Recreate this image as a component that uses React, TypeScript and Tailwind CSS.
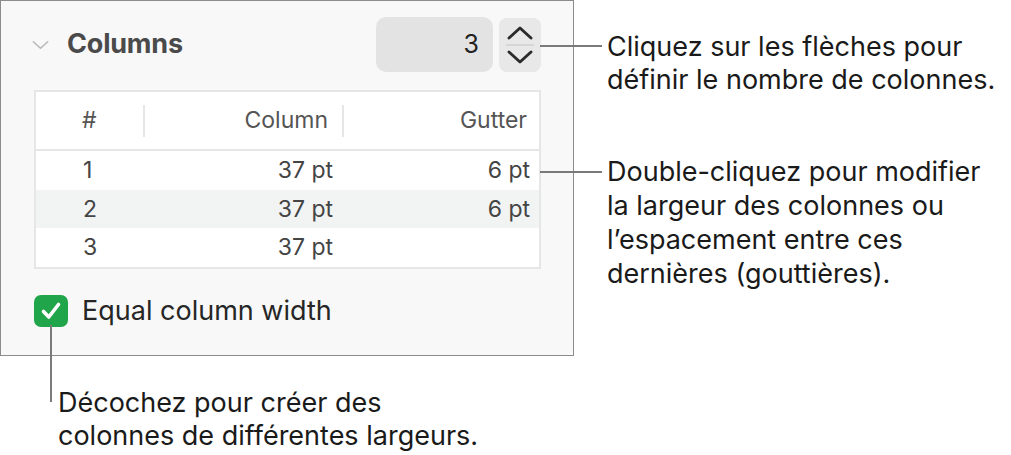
import React from "react"

const ROWS = [
  { n: "1", column: "37 pt", gutter: "6 pt" },
  { n: "2", column: "37 pt", gutter: "6 pt" },
  { n: "3", column: "37 pt", gutter: "" },
]

const Chevron = ({ up, className, width = 2.4 }: { up?: boolean; className?: string; width?: number }) => (
  <svg viewBox="0 0 26 14" className={className} fill="none">
    <path
      d={up ? "M2 12 L13 2 L24 12" : "M2 2 L13 12 L24 2"}
      stroke="currentColor"
      strokeWidth={width}
      strokeLinecap="round"
      strokeLinejoin="round"
    />
  </svg>
)

const ColumnsPanel = () => (
  <div className="w-[574px] h-[356px] shrink-0 border border-[#8c8c8c] bg-[#f8f8f8] pl-[33px] pr-[32px] pt-[16px]">
    <div className="flex items-center h-[55px]">
      <Chevron className="w-[17px] h-[10px] text-[#b8b8b8] ml-[-2px]" />
      <span className="ml-[18px] text-[27px] font-bold text-[#4a4a4a] tracking-[-0.2px]">Columns</span>
      <div className="ml-auto flex items-center gap-[6px] h-full">
        <div className="w-[117px] h-[55px] rounded-[10px] bg-[#e3e3e3] flex items-center justify-end pr-[14px] text-[25px] text-[#222]">
          3
        </div>
        <div className="w-[42px] h-[54px] rounded-[8px] bg-[#e8e8e8] flex flex-col items-center justify-center">
          <Chevron up width={2.9} className="w-[26px] h-[14px] text-[#2a2a2a]" />
          <div className="w-[28px] h-[2px] bg-[#d6d6d6] my-[4px]" />
          <Chevron width={2.9} className="w-[26px] h-[14px] text-[#2a2a2a]" />
        </div>
      </div>
    </div>

    <div className="mt-[18px] border-2 border-[#e6e6e6] bg-white text-[23px]">
      <div className="flex items-center h-[59px] border-b-2 border-[#e6e6e6] text-[#555]">
        <div className="w-[107px] pl-[46px]">#</div>
        <div className="w-[2px] h-[32px] bg-[#e6e6e6]" />
        <div className="w-[197px] text-right pr-[14px]">Column</div>
        <div className="w-[2px] h-[32px] bg-[#e6e6e6]" />
        <div className="flex-1 text-right pr-[12px]">Gutter</div>
      </div>
      {ROWS.map((row, i) => (
        <div
          key={row.n}
          className={`flex items-center h-[38.5px] text-[#444] ${i === 1 ? "bg-[#f2f3f3]" : ""}`}
        >
          <div className="w-[107px] pl-[47px]">{row.n}</div>
          <div className="w-[199px] text-right pr-[9px]">{row.column}</div>
          <div className="flex-1 text-right pr-[9px]">{row.gutter}</div>
        </div>
      ))}
    </div>

    <div className="mt-[22px] flex items-center">
      <div className="w-[34px] h-[32px] rounded-[7px] bg-[#21a54b] flex items-center justify-center">
        <svg viewBox="0 0 24 24" className="w-[24px] h-[24px]" fill="none">
          <path d="M4.5 12.5 L9.8 18 L19.5 5.5" stroke="white" strokeWidth="3.6" strokeLinecap="round" strokeLinejoin="round" />
        </svg>
      </div>
      <span className="ml-[14px] text-[27px] text-[#262626]">Equal column width</span>
    </div>
  </div>
)

export default function App() {
  return (
    <div className="relative w-[1011px] h-[455px] bg-white overflow-hidden font-['Inter','Liberation_Sans',sans-serif]">
      <div className="flex">
        <ColumnsPanel />
        <div className="flex flex-col pl-[33px] text-[27px] leading-[33px] text-[#1a1a1a]">
          <p className="mt-[30px]">
            Cliquez sur les flèches pour
            <br />
            définir le nombre de colonnes.
          </p>
          <p className="mt-[59px] leading-[34px]">
            Double-cliquez pour modifier
            <br />
            la largeur des colonnes ou
            <br />
            l’espacement entre ces
            <br />
            dernières (gouttières).
          </p>
        </div>
      </div>
      <p className="pl-[58px] mt-[30px] text-[27px] leading-[33px] text-[#1a1a1a]">
        Décochez pour créer des
        <br />
        colonnes de différentes largeurs.
      </p>

      {/* callout leader lines */}
      <div className="absolute left-[540px] top-[45px] w-[62px] h-[2px] bg-[#7a7a7a]" />
      <div className="absolute left-[540px] top-[171px] w-[62px] h-[2px] bg-[#7a7a7a]" />
      <div className="absolute left-[50px] top-[325px] w-[2px] h-[77px] bg-[#7a7a7a]" />
    </div>
  )
}
